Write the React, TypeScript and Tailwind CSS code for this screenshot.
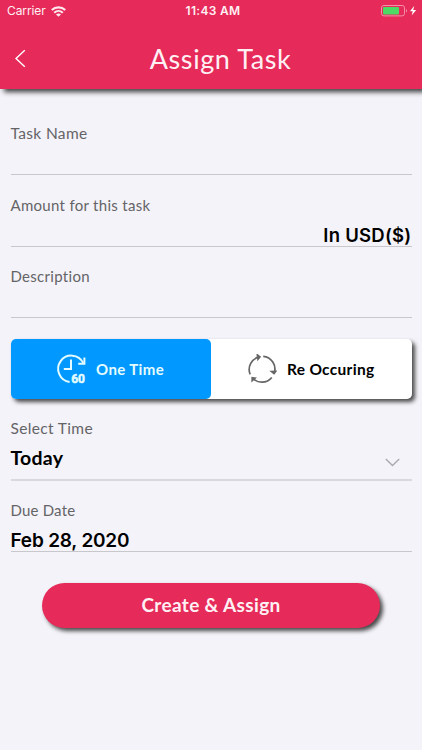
import type { ReactNode } from "react";

function WifiIcon() {
  return (
    <svg width="15" height="11" viewBox="0 0 15 11" fill="none" stroke="#ffe9ef" strokeWidth="2.1">
      <path d="M.8 4.1C4.5.4 10.5.4 14.2 4.1" />
      <path d="M3.2 6.7c2.5-2.3 6.1-2.3 8.6 0" />
      <path d="M7.5 10.8 5 8.5c1.4-1.3 3.6-1.3 5 0z" fill="#ffe9ef" stroke="none" />
    </svg>
  );
}

function BatteryIcon() {
  return (
    <svg width="36" height="12" viewBox="0 0 36 12" fill="none">
      <rect x="0.5" y="0.5" width="23" height="10.4" rx="2.4" stroke="#f391ad" />
      <rect x="2" y="2" width="16" height="7.4" rx="1" fill="#4cd964" />
      <path d="M25 4c1.4.5 1.4 3 0 3.5z" fill="#f391ad" />
      <path d="M33.3.8 29 6.2h2.8L30.6 10.6 35.2 5h-3z" fill="#fff" />
    </svg>
  );
}

function ClockIcon() {
  return (
    <svg className="overflow-visible" width="30" height="34" viewBox="0 -1.5 30 34" fill="none" stroke="#e4fbff" strokeWidth="2">
      <path d="M13.6 28.4A13.2 13.2 0 1 1 27.2 9.4" />
      <path d="M28.4 4v6.2h-6.2" />
      <path d="M15 6v9.6H7.8" />
      <text x="15.2" y="29.4" fill="#e4fbff" stroke="#e4fbff" strokeWidth="0.5" fontFamily="Roboto, sans-serif" fontSize="12" fontWeight="700">60</text>
    </svg>
  );
}

function CycleIcon() {
  return (
    <svg width="30" height="30" viewBox="0 0 30 30" fill="none" stroke="#666" strokeWidth="1.7">
      <path d="M3.2 20.4A12.8 12.8 0 0 1 12.6 2.9" />
      <path d="M10.4 1 12.9 2.8 11 5.2z" fill="#666" />
      <path d="M16.2 2.3A12.8 12.8 0 0 1 27.2 19.2" />
      <path d="M24.6 17.6 27 19.6 28.6 17.4z" fill="#666" />
      <path d="M24.8 23.5A12.8 12.8 0 0 1 5.4 24" />
      <path d="M5.2 26.6 5.2 23.8 8 24.2z" fill="#666" />
    </svg>
  );
}

function Label({ children, className }: { children: ReactNode; className: string }) {
  return <div className={`h-5 leading-5 text-[#646467] ${className}`}>{children}</div>;
}

export default function App() {
  return (
    <div className="h-[750px] w-[422px] overflow-hidden bg-[#f4f3f9] font-['Lato',sans-serif] whitespace-nowrap">
      <header className="h-[89px] bg-[#e62a5a] text-[#fff0f4] shadow-[4px_3px_5px_rgba(0,0,0,0.75)]">
        <div className="grid h-[22px] grid-cols-3 items-center pr-[5px] pl-[7px] font-['Inter',sans-serif]">
          <div className="flex items-center gap-[5px]">
            <span className="text-[12px] tracking-[-0.1px]">Carrier</span>
            <WifiIcon />
          </div>
          <div className="pl-[2px] text-center text-[12px] font-semibold tracking-[0.3px]">11:43 AM</div>
          <div className="flex justify-end">
            <BatteryIcon />
          </div>
        </div>
        <div className="grid h-[67px] grid-cols-[40px_1fr_40px] items-center pb-[1px]">
          <svg className="mt-[6px] ml-[14px]" width="12" height="19" viewBox="0 0 12 19" fill="none" stroke="#fff" strokeWidth="1.4">
            <path d="M10.8 1.2 2 9.6l8.8 8.2" />
          </svg>
          <h1 className="pt-[8px] pl-[19px] text-center text-[27px] tracking-[0.6px]">Assign Task</h1>
        </div>
      </header>

      <main className="px-[10.5px]">
        <div className="h-[86px] border-b border-[#c8c7cc] pt-[34px]">
          <Label className="text-[15.5px] tracking-[0.35px]">Task Name</Label>
        </div>
        <div className="h-[71.5px] border-b border-[#c8c7cc] pt-5">
          <Label className="text-[15px] tracking-[0.3px]">Amount for this task</Label>
          <div className="mt-[9px] text-right font-['Inter',sans-serif] text-[18.5px] leading-[22px] font-semibold tracking-[0.25px]">In USD($)</div>
        </div>
        <div className="h-[71.5px] border-b border-[#c8c7cc] pt-[19px]">
          <Label className="text-[15px] tracking-[0.3px]">Description</Label>
        </div>

        <div className="mt-[20.5px] flex h-[60px] rounded-[5px] bg-white font-bold shadow-[3px_3px_4px_rgba(0,0,0,0.7)]">
          <button className="flex w-[200.5px] items-center gap-[10px] rounded-[5px] bg-[#0199ff] pl-[45.5px] text-[15px] text-[#e4fbff]">
            <ClockIcon />
            <span className="pt-[1px] tracking-[0.4px]">One Time</span>
          </button>
          <button className="flex flex-1 items-center gap-[10px] pl-[36px] text-[15.5px] text-black">
            <CycleIcon />
            <span className="pt-[2px] tracking-[0.3px]">Re Occuring</span>
          </button>
        </div>

        <div className="h-[82.5px] border-b-2 border-[#d9d8de] pt-[19px]">
          <Label className="text-[15.5px] tracking-[0.35px]">Select Time</Label>
          <div className="mt-[8px] flex h-6 items-center justify-between pr-[12px]">
            <span className="text-[19.5px] font-bold tracking-[0.25px]">Today</span>
            <svg className="mt-[10px]" width="15" height="9" viewBox="0 0 15 9" fill="none" stroke="#aaa9ae" strokeWidth="1.4">
              <path d="m.8.9 6.7 6.7L14.2.9" />
            </svg>
          </div>
        </div>
        <div className="h-[71px] border-b border-[#c8c7cc] pt-[19px]">
          <Label className="text-[15px] tracking-[0.2px]">Due Date</Label>
          <div className="mt-[10px] font-['Inter',sans-serif] text-[19px] leading-[22px] font-semibold tracking-[-0.2px]">Feb 28, 2020</div>
        </div>

        <button className="mt-[31px] ml-[31.5px] flex h-[45px] w-[338px] items-center justify-center rounded-full bg-[#e62a5a] text-[19px] font-bold text-[#fff0f4] shadow-[3px_3px_4px_rgba(0,0,0,0.7)]">
          <span className="tracking-[0.35px]">Create &amp; Assign</span>
        </button>
      </main>
    </div>
  );
}
